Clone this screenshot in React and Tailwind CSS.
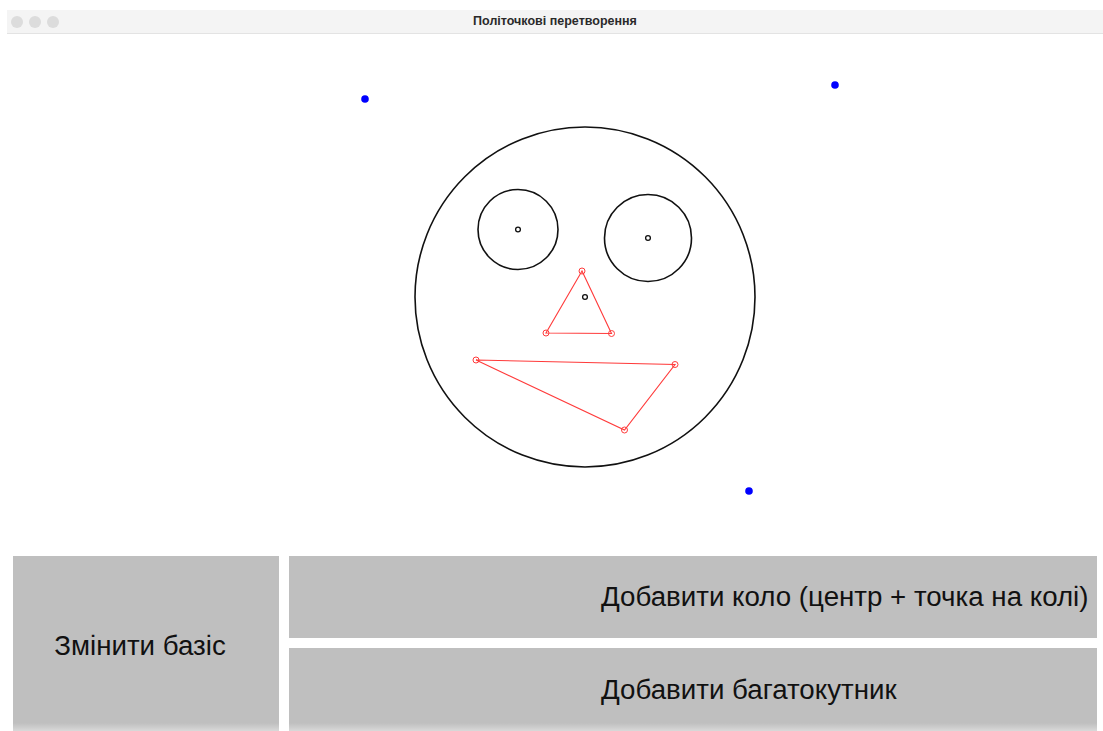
import React from "react";

const font = { fontFamily: '"Liberation Sans", Arial, sans-serif' };

// points are in window coordinates (viewBox starts at the canvas corner)
const basis = [
	[365, 99],
	[835, 85],
	[749, 491],
];

const circles = [
	{ cx: 585, cy: 297, r: 170 },
	{ cx: 518, cy: 229.5, r: 40 },
	{ cx: 648, cy: 238, r: 43.5 },
];

const polygons = [
	[
		[582, 271],
		[546, 333],
		[611.5, 333.5],
	],
	[
		[476, 360],
		[675, 364.5],
		[624.5, 430],
	],
];

const Canvas = () => (
	<svg
		className="block w-full h-full"
		viewBox="7 34 1096 522"
		preserveAspectRatio="xMinYMin meet">
		{circles.map((c, i) => (
			<g key={i}>
				<circle cx={c.cx} cy={c.cy} r={c.r} fill="none" stroke="#111" strokeWidth="1.6" />
				<circle cx={c.cx} cy={c.cy} r="2.4" fill="none" stroke="#111" strokeWidth="1.3" />
			</g>
		))}
		{polygons.map((pts, i) => (
			<g key={i}>
				<polygon
					points={pts.map((p) => p.join(",")).join(" ")}
					fill="none"
					stroke="#ff3b3b"
					strokeWidth="1.1"
				/>
				{pts.map(([x, y], j) => (
					<circle key={j} cx={x} cy={y} r="3" fill="none" stroke="#ff3b3b" strokeWidth="1" />
				))}
			</g>
		))}
		{basis.map(([x, y], i) => (
			<circle key={i} cx={x} cy={y} r="3.8" fill="#0000ff" />
		))}
	</svg>
);

const PanelButton = ({ children, className = "" }) => (
	<button
		type="button"
		className={`bg-[#bfbfbf] text-[#111] text-[27.7px] leading-none flex items-center ${className}`}
		style={font}>
		{children}
	</button>
);

export default function App() {
	return (
		<div className="w-[1103px] h-[731px] bg-white pl-[7px] pt-[10px] overflow-hidden" style={font}>
			<div className="h-full flex flex-col bg-white">
				<div className="h-[24px] shrink-0 relative flex items-center justify-center bg-[#f4f4f4] border-b border-[#e3e3e3]">
					<div className="absolute left-[4px] top-[6px] flex gap-[6px]">
						<span className="w-[12px] h-[12px] rounded-full bg-[#dcdcdc]" />
						<span className="w-[12px] h-[12px] rounded-full bg-[#dcdcdc]" />
						<span className="w-[12px] h-[12px] rounded-full bg-[#dcdcdc]" />
					</div>
					<span className="text-[12.5px] font-bold text-[#2a2a2a]">Політочкові перетворення</span>
				</div>

				<div className="h-[522px] shrink-0">
					<Canvas />
				</div>

				<div className="flex-1 grid grid-cols-[266px_1fr] gap-[10px] px-[6px] relative">
					<PanelButton className="justify-center pt-[4px] pr-[12px]">Змінити базіс</PanelButton>
					<div className="flex flex-col gap-[10px]">
						<PanelButton className="h-[82px] pl-[312px]">
							Добавити коло (центр + точка на колі)
						</PanelButton>
						<PanelButton className="flex-1 pl-[312px]">Добавити багатокутник</PanelButton>
					</div>
					<div className="absolute left-0 right-0 bottom-0 h-[8px] bg-gradient-to-b from-transparent to-white/40" />
				</div>
			</div>
		</div>
	);
}
